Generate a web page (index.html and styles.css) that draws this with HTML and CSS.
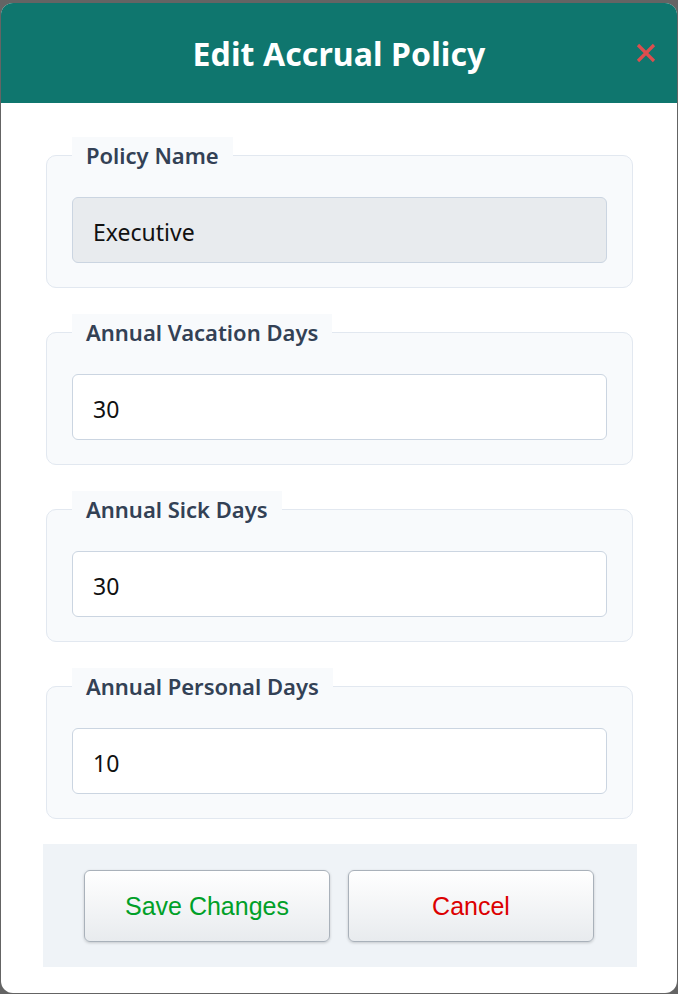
FILE: index.html
```html
<!DOCTYPE html>
<html lang="en">
<head>
<meta charset="utf-8">
<title>Edit Accrual Policy</title>
<link rel="stylesheet" href="styles.css">
</head>
<body>
<div class="overlay">
  <div class="modal">
    <div class="modal-header">
      <h2 class="modal-title">Edit Accrual Policy</h2>
      <button class="close-btn" aria-label="Close">
        <svg width="20" height="20" viewBox="0 0 20 20"><path d="M2 2 L18 18 M18 2 L2 18" stroke="#dc4e4e" stroke-width="3.2" stroke-linecap="butt" fill="none"/></svg>
      </button>
    </div>
    <div class="modal-body">
      <fieldset class="field">
        <legend class="field-legend">Policy Name</legend>
        <input class="field-input" type="text" value="Executive" disabled>
      </fieldset>
      <fieldset class="field">
        <legend class="field-legend">Annual Vacation Days</legend>
        <input class="field-input" type="text" value="30">
      </fieldset>
      <fieldset class="field">
        <legend class="field-legend">Annual Sick Days</legend>
        <input class="field-input" type="text" value="30">
      </fieldset>
      <fieldset class="field">
        <legend class="field-legend">Annual Personal Days</legend>
        <input class="field-input" type="text" value="10">
      </fieldset>
      <div class="modal-footer">
        <button class="btn btn-save">Save Changes</button>
        <button class="btn btn-cancel">Cancel</button>
      </div>
    </div>
  </div>
</div>
</body>
</html>
```
FILE: styles.css
```css
* { box-sizing: border-box; }
html, body { margin: 0; padding: 0; }
body {
  background: #646464;
  font-family: "Noto Sans", "Open Sans", sans-serif;
  width: 678px;
  height: 994px;
  overflow: hidden;
}
.overlay {
  padding: 3px 1px 1px 1px;
}
.modal {
  background: #ffffff;
  border-radius: 12px;
  overflow: hidden;
  height: 990px;
  display: flex;
  flex-direction: column;
}
.modal-header {
  position: relative;
  background: #0f766e;
  height: 100px;
  display: flex;
  align-items: center;
  justify-content: center;
}
.modal-title {
  margin: 0;
  color: #ffffff;
  font-size: 32px;
  font-weight: 700;
  letter-spacing: 0.1px;
}
.close-btn {
  position: absolute;
  right: 21px;
  top: 40px;
  width: 20px;
  height: 20px;
  padding: 0;
  border: 0;
  background: transparent;
  display: flex;
}
.modal-body {
  padding: 34px 40px 0 42px;
  display: flex;
  flex-direction: column;
  gap: 26px;
}
.field {
  margin: 0 4px 0 3px;
  padding: 0 25px 24px 25px;
  border: 1px solid #e2e8f0;
  border-radius: 10px;
  background: #f8fafc;
  min-width: 0;
}
.field-legend {
  padding: 0 14px;
  background: #f8fafc;
  color: #334155;
  font-size: 22px;
  font-weight: 600;
  line-height: 37px;
}
.field-input {
  display: block;
  width: 100%;
  height: 66px;
  margin-top: 23px;
  padding: 3px 20px 0;
  border: 1px solid #cbd5e1;
  border-radius: 6px;
  background: #ffffff;
  color: #111111;
  font-family: "Noto Sans", "Open Sans", sans-serif;
  font-size: 23px;
}
.field-input:disabled {
  background: #e8ebee;
  color: #111111;
}
.modal-footer {
  margin-top: -1px;
  background: #eff3f7;
  padding: 26px 2px 25px 0;
  display: flex;
  justify-content: center;
  gap: 18px;
}
.btn {
  width: 246px;
  height: 72px;
  border: 1px solid #a9b1ba;
  border-radius: 6px;
  background: linear-gradient(#ffffff, #e8ebee);
  box-shadow: 0 1px 3px rgba(0, 0, 0, 0.18);
  font-family: "Liberation Sans", Arial, sans-serif;
  font-size: 25px;
}
.btn-save { color: #00a028; }
.btn-cancel { color: #dc0000; }
```
